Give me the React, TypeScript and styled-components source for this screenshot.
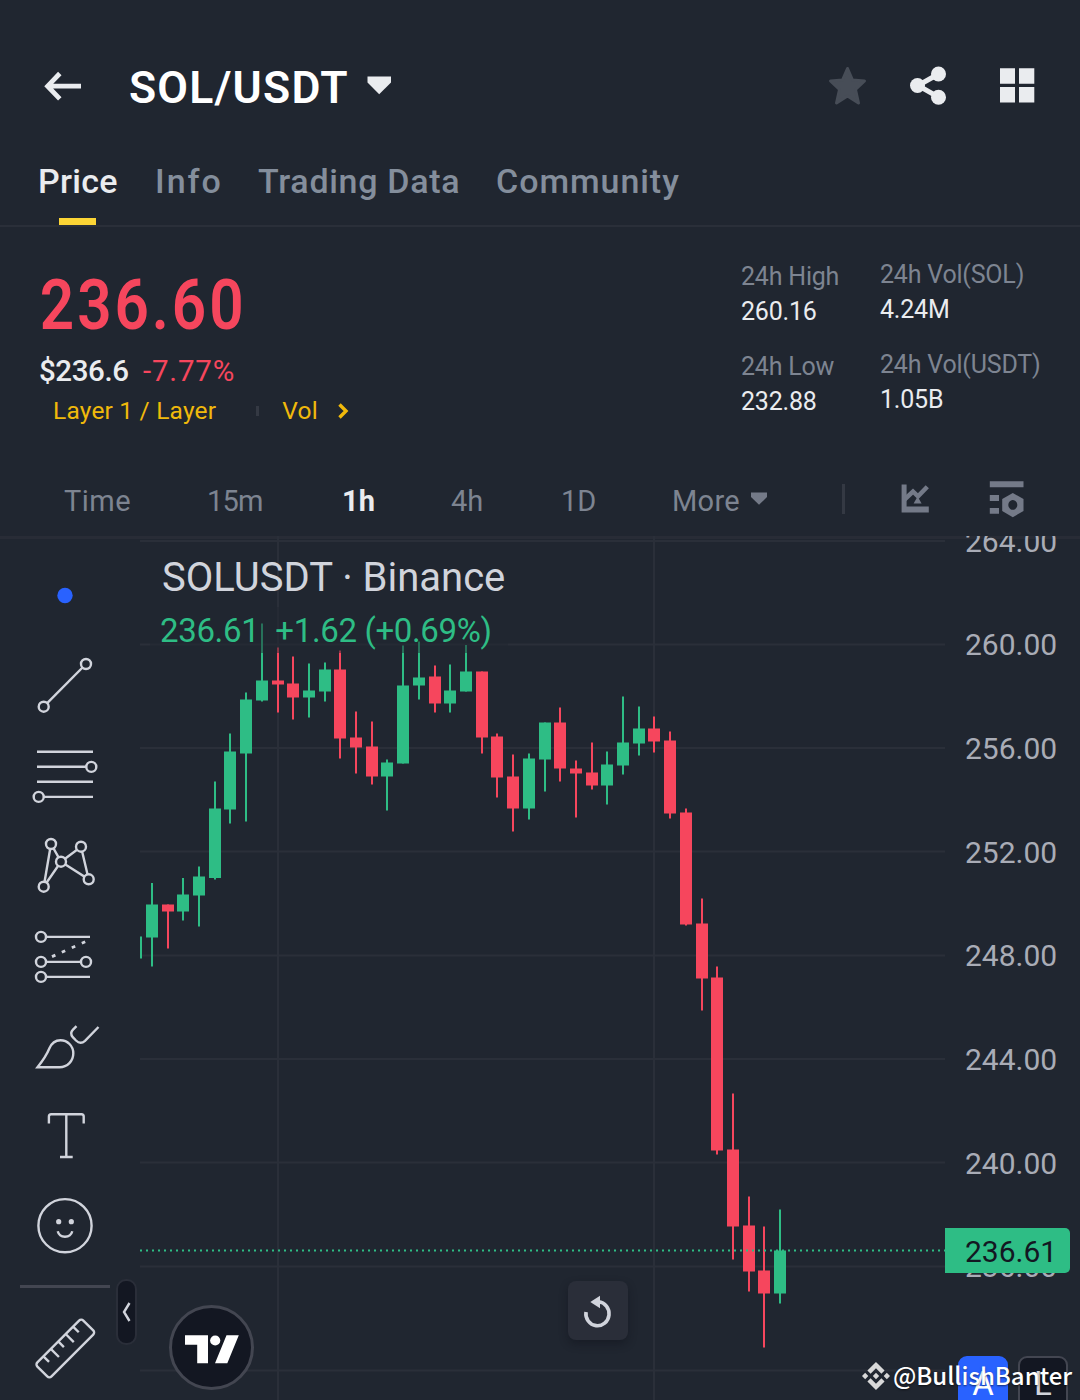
import React from "react";
import styled, { createGlobalStyle } from "styled-components";

const c = {
  bg: "#202630",
  line: "#2a2f39",
  strong: "#eaecef",
  muted: "#848e9c",
  icon: "#747a88",
  tool: "#d1d4dc",
  red: "#f6465d",
  green: "#2ebd85",
  yellow: "#fcd535",
  gold: "#f0b90b",
  ink: "#131722",
};

const GlobalStyle = createGlobalStyle`
  * { box-sizing: border-box; }
  body { margin: 0; background: ${c.bg}; }
`;

const Screen = styled.main`
  display: flex;
  flex-direction: column;
  width: 1080px;
  height: 1400px;
  overflow: hidden;
  position: relative;
  background: ${c.bg};
  color: ${c.strong};
  font-family: Roboto, "Liberation Sans", sans-serif;
  white-space: nowrap;
`;

const Glyph = styled.svg`
  display: block;
  flex: none;
`;

/* ---------- header ---------- */

const Header = styled.header`
  display: flex;
  align-items: center;
  height: 118px;
  margin-top: 28px;
  padding: 0 45px 0 43px;
`;

const Pair = styled.h1`
  margin: 2px 0 0 46px;
  width: 237px;
  font-size: 44.5px;
  line-height: 60px;
  font-weight: 600;
  letter-spacing: 1.2px;
  color: #fff;
`;

const Actions = styled.div`
  display: flex;
  align-items: center;
  gap: 43px;
  margin-left: auto;
  margin-bottom: 2px;
`;

const Tabs = styled.nav`
  display: flex;
  height: 81px;
  padding-left: 38px;
  border-bottom: 2px solid ${c.line};
`;

const Tab = styled.div<{ $active?: boolean; $w: number; $track: number }>`
  display: flex;
  flex-direction: column;
  width: ${(p) => p.$w}px;
  font-size: 34px;
  line-height: 70px;
  font-weight: 500;
  letter-spacing: ${(p) => p.$track}px;
  color: ${(p) => (p.$active ? c.strong : c.muted)};
`;

const Underline = styled.span`
  width: 37px;
  height: 8px;
  margin: 2px 0 0 21px;
  background: ${c.yellow};
`;

/* ---------- ticker ---------- */

const Ticker = styled.section`
  display: flex;
  height: 237px;
  padding: 32px 0 0 39px;
`;

const Quote = styled.div`
  width: 702px;
  padding-top: 3px;
`;

const BigPrice = styled.div`
  padding-left: 1px;
  font-size: 70px;
  line-height: 86px;
  font-weight: 600;
  letter-spacing: 3.4px;
  color: ${c.red};
  transform: scaleX(0.86);
  transform-origin: left;
`;

const FiatRow = styled.div`
  display: flex;
  font-size: 29.5px;
  line-height: 47px;
  font-weight: 500;
`;

const Fiat = styled.span`
  width: 104px;
  letter-spacing: -0.4px;
`;

const Change = styled.span`
  color: ${c.red};
  font-weight: 400;
  letter-spacing: 0.8px;
`;

const TagRow = styled.div`
  display: flex;
  align-items: center;
  padding-left: 14px;
  font-size: 24.5px;
  line-height: 32px;
  letter-spacing: 0.2px;
  color: ${c.gold};
`;

const Tick = styled.span`
  width: 3px;
  height: 10px;
  margin: 0 23px 0 40px;
  background: #343943;
`;

const StatColumn = styled.div<{ $w: number; $raise?: number }>`
  display: flex;
  flex-direction: column;
  gap: 20px;
  width: ${(p) => p.$w}px;
  margin-top: ${(p) => -(p.$raise ?? 0)}px;
`;

const Stat = styled.div`
  display: flex;
  flex-direction: column;
  font-size: 25px;
  line-height: 35px;
  letter-spacing: -0.2px;
`;

const StatLabel = styled.span`
  color: #7d8491;
`;

/* ---------- intervals ---------- */

const Intervals = styled.div`
  display: grid;
  grid-template-columns: 143px 135px 109px 110px 111px 78px 92px 58px 89px auto;
  align-items: center;
  height: 72px;
  padding-left: 64px;
  font-size: 29px;
  color: ${c.muted};
`;

const Interval = styled.span<{ $active?: boolean; $track?: number }>`
  padding-top: 1px;
  color: ${(p) => (p.$active ? c.strong : "#7d8491")};
  font-weight: ${(p) => (p.$active ? 700 : 400)};
  letter-spacing: ${(p) => p.$track ?? 0}px;
`;

const VRule = styled.span`
  width: 3px;
  height: 30px;
  margin-bottom: 2px;
  background: #343943;
`;

/* ---------- chart ---------- */

const ChartArea = styled.section`
  display: flex;
  flex: 1;
  min-height: 0;
  box-shadow: inset 0 3px #282c36;
`;

const Toolbar = styled.aside`
  display: flex;
  flex-direction: column;
  position: relative;
  width: 140px;
  padding: 14px 0 0 20px;
`;

const Separator = styled.span`
  width: 90px;
  height: 3px;
  margin: 15px 0;
  background: #434651;
`;

const Handle = styled.button`
  position: absolute;
  left: 116px;
  top: 743px;
  width: 21px;
  height: 66px;
  padding: 0;
  display: grid;
  place-items: center;
  border: 2px solid #2a2e39;
  border-radius: 10px;
  background: ${c.ink};
`;

const Pane = styled.div`
  position: relative;
  width: 805px;
`;

const Legend = styled.div`
  position: absolute;
  left: 10px;
  top: 11px;
  color: ${c.tool};
`;

const LegendTitle = styled.div`
  padding-left: 12px;
  height: 60px;
  font-size: 40px;
  line-height: 61px;
`;

const LegendValues = styled.div`
  display: flex;
  gap: 16px;
  width: 358px;
  height: 46px;
  padding-left: 10px;
  font-size: 33px;
  line-height: 47px;
  letter-spacing: -0.35px;
  color: ${c.green};
  background: rgba(32, 38, 48, 0.5);
`;

const Reload = styled.button`
  position: absolute;
  left: 428px;
  top: 745px;
  width: 60px;
  height: 59px;
  padding: 0;
  border: 0;
  border-radius: 8px;
  background: #2a2e39;
  box-shadow: 0 4px 8px rgba(15, 18, 26, 0.45);
`;

const Badge = styled.div`
  position: absolute;
  left: 29px;
  top: 769px;
  width: 85px;
  height: 85px;
  border: 3px solid #434651;
  border-radius: 50%;
  background: ${c.ink};
`;

const PriceScale = styled.div`
  position: relative;
  display: flex;
  flex-direction: column;
  width: 135px;
  overflow: hidden;
`;

const Level = styled.span<{ $first?: boolean }>`
  flex: none;
  height: 103.7px;
  margin-top: ${(p) => (p.$first ? -46.5 : 0)}px;
  padding-left: 20px;
  font-size: 30px;
  line-height: 103.7px;
  color: #a9acb6;
`;

const LastPrice = styled.span`
  position: absolute;
  left: 0;
  top: 692px;
  width: 125px;
  height: 45px;
  padding-left: 20px;
  border-radius: 0 5px 5px 0;
  background: ${c.green};
  color: ${c.ink};
  font-size: 30px;
  line-height: 47px;
`;

const ScaleModes = styled.div`
  position: absolute;
  left: 13px;
  top: 820px;
  display: flex;
  gap: 10px;
`;

const Mode = styled.span<{ $on?: boolean }>`
  width: 50px;
  height: 56px;
  border-radius: 9px;
  border: 2px solid ${(p) => (p.$on ? "#2962ff" : "#434651")};
  background: ${(p) => (p.$on ? "#2962ff" : c.ink)};
  color: ${(p) => (p.$on ? "#fff" : c.tool)};
  font-size: 33px;
  line-height: 52px;
  text-align: center;
`;

const Watermark = styled.div`
  position: absolute;
  left: 862px;
  top: 1361px;
  display: flex;
  align-items: center;
  gap: 3px;
  height: 30px;
  color: #fff;
  font: 500 24px/30px "Noto Sans CJK SC", "Noto Sans", sans-serif;
  text-shadow: 0 1px 2px rgba(0, 0, 0, 0.55);
`;

const Handle2 = styled.span`
  margin-top: -2px;
`;

/* ---------- data ---------- */

// x centre, wick top, body top, body bottom, wick bottom, rising
type Candle = [number, number, number, number, number, 0 | 1];
const candles: Candle[] = [
  [152, 883, 904.5, 937.5, 966.5, 1],
  [168, 904.5, 904.5, 911.5, 948.5, 0],
  [183, 878, 894.5, 911.5, 920.5, 1],
  [199, 866.5, 876.5, 895.5, 926.5, 1],
  [215, 781.5, 808.5, 878, 879.5, 1],
  [230, 733.5, 751.5, 809.5, 823.5, 1],
  [246, 692.5, 699.5, 753.5, 821.5, 1],
  [262, 623.5, 680.5, 700.5, 701.5, 1],
  [278, 647.5, 680.5, 684.5, 712.5, 0],
  [293, 656.5, 683.5, 697.5, 719.5, 0],
  [309, 663.5, 690.5, 697.5, 717.5, 1],
  [325, 662.5, 669.5, 691.5, 701.5, 1],
  [340, 650.5, 669.5, 738.5, 758.5, 0],
  [356, 711.5, 737.5, 747.5, 773.5, 0],
  [372, 721.5, 746.5, 776.5, 784.5, 0],
  [387, 759.5, 762.5, 776.5, 810.5, 1],
  [403, 645.5, 685.5, 763.5, 763.5, 1],
  [419, 641.5, 677.5, 685.5, 699.5, 1],
  [435, 665.5, 676.5, 703.5, 712.5, 0],
  [450, 664.5, 690.5, 703.5, 712.5, 1],
  [466, 645, 671.5, 691.5, 691.5, 1],
  [482, 671.5, 671.5, 737.5, 753.5, 0],
  [497, 733.5, 736.5, 777.5, 797.5, 0],
  [513, 754.5, 776.5, 808.5, 831.5, 0],
  [529, 753.5, 758.5, 808.5, 819.5, 1],
  [545, 722.5, 722.5, 759.5, 791.5, 1],
  [560, 707.5, 722.5, 768.5, 781.5, 0],
  [576, 760.5, 768.5, 773.5, 817.5, 0],
  [592, 742.5, 772.5, 785.5, 789.5, 0],
  [607, 751.5, 764.5, 785.5, 804.5, 1],
  [623, 696.5, 742.5, 765.5, 774.5, 1],
  [639, 706.5, 728.5, 743.5, 755.5, 1],
  [654, 716.5, 728.5, 741.5, 752.5, 0],
  [670, 731.5, 740.5, 813.5, 818.5, 0],
  [686, 808.5, 812.5, 924.5, 925.5, 0],
  [702, 898.5, 923.5, 978.5, 1010.5, 0],
  [717, 966.5, 977.5, 1150.5, 1154.5, 0],
  [733, 1093.5, 1149.5, 1226.5, 1259.5, 0],
  [749, 1196.5, 1225.5, 1271.5, 1291.5, 0],
  [764, 1226.5, 1270.5, 1293.5, 1347.5, 0],
  [780, 1209.5, 1250.5, 1293.5, 1303.5, 1],
];

const gridRows = [541, 644.5, 748, 851.5, 955.5, 1059, 1162.5, 1266.5, 1370.5];
const gridCols = [278, 654];
const levels = ["264.00", "260.00", "256.00", "252.00", "248.00", "244.00", "240.00", "236.00"];

const tabs = [
  { label: "Price", w: 117, track: 0.3 },
  { label: "Info", w: 103, track: 2 },
  { label: "Trading Data", w: 238, track: 0.7 },
  { label: "Community", w: 200, track: 0.95 },
];

const intervals = [
  { label: "Time", track: 0.5 },
  { label: "15m", track: -0.8 },
  { label: "1h", active: true },
  { label: "4h" },
  { label: "1D" },
  { label: "More", track: 0.3 },
];

const statColumns = [
  {
    w: 139,
    raise: 0,
    items: [
      { label: "24h High", value: "260.16" },
      { label: "24h Low", value: "232.88" },
    ],
  },
  {
    w: 190,
    raise: 2,
    items: [
      { label: "24h Vol(SOL)", value: "4.24M" },
      { label: "24h Vol(USDT)", value: "1.05B" },
    ],
  },
];

/* ---------- drawings ---------- */

const Tool = ({ children }: { children: React.ReactNode }) => (
  <Glyph width="90" height="90" viewBox="0 0 90 90" fill="none" stroke={c.tool} strokeWidth="2.4">
    {children}
  </Glyph>
);

const Nodes = ({ at }: { at: [number, number][] }) => (
  <>
    {at.map(([x, y]) => (
      <circle key={`${x}-${y}`} cx={x} cy={y} r="5" fill={c.bg} />
    ))}
  </>
);

const Tools = () => (
  <>
    <Tool>
      <circle cx="45" cy="45.5" r="7.7" fill="#2962ff" stroke="none" />
    </Tool>
    <Tool>
      <path d="M23.7 66.7 66 24" />
      <Nodes at={[[23.7, 66.7], [66, 24]]} />
    </Tool>
    <Tool>
      <path d="M17 21.7h56M17 36.7h54M17 51.7h56M19 66.9h54" />
      <Nodes at={[[71.3, 36.9], [18.7, 66.9]]} />
    </Tool>
    <Tool>
      <path d="M31 24 23.7 66.7 41 41.7zM41 41.7 61 26.7 68.7 59.3z" />
      <Nodes at={[[31, 24], [61, 26.7], [41, 41.7], [23.7, 66.7], [68.7, 59.3]]} />
    </Tool>
    <Tool>
      <path d="M21 26.9h49M21 51.9h45M21 66.9h49" />
      <path d="m32 46.6 3.4-1.5m6.4-2.9 3.4-1.5m6.6-3 3.4-1.5m6.6-3 3.4-1.5" strokeWidth="2.8" />
      <Nodes at={[[21, 26.9], [21, 51.9], [66, 51.9], [21, 66.9]]} />
    </Tool>
    <Tool>
      <path d="M17.5 67.3H39.5C47.5 67.3 53.3 61 53.3 53.3 53.3 46 47.5 40.2 40.5 40.2 35 40.2 31.500 43.2 29.3 48.5 26.500 55.500 22.500 61 17.500 67.3z" />
      <path d="M56.500 26.200 53 29.700Q49.500 33.300 52.800 37.200L56 40.500Q60.500 44.800 65 40.800L78.500 27" />
    </Tool>
    <Tool>
      <path d="M28.900 33.500V26.500Q28.900 24.200 31.200 24.200H61.400Q63.700 24.200 63.700 26.500V33.500M46.300 24.200V67M40 67H52.700" />
    </Tool>
    <Tool>
      <circle cx="45" cy="45.700" r="26.600" />
      <circle cx="38.700" cy="41.700" r="2.600" fill={c.tool} stroke="none" />
      <circle cx="51.300" cy="41.700" r="2.600" fill={c.tool} stroke="none" />
      <path d="M37.700 51.200C39.700 58.500 50.300 58.500 52.300 51.200" />
    </Tool>
    <Separator />
    <Tool>
      <g transform="translate(45.300 45.500) rotate(-45)">
        <rect x="-32.500" y="-10" width="65" height="20" rx="3" />
        <path d="M-21-10V-2M-10.500-10V1.500M0-10V-2M10.500-10V1.500M21-10V-2" />
      </g>
    </Tool>
  </>
);

const Plot = () => (
  <Glyph width="805" height="864" viewBox="140 536 805 864">
    <g stroke={c.line} strokeWidth="2">
      {gridRows.map((y) => (
        <path key={y} d={`M140 ${y}H945`} />
      ))}
      {gridCols.map((x) => (
        <path key={x} d={`M${x} 536V1400`} />
      ))}
    </g>
    <rect x="140" y="936.500" width="2" height="22" fill={c.green} />
    {candles.map(([x, high, top, bottom, low, up]) => (
      <g key={x} fill={up ? c.green : c.red}>
        <rect x={x - 1} y={high} width="2" height={low - high} />
        <rect x={x - 6} y={top} width="12" height={bottom - top} />
      </g>
    ))}
    <path d="M140 1250.500H945" stroke={c.green} strokeWidth="2" strokeDasharray="2 4" />
  </Glyph>
);

export default function App() {
  return (
    <>
      <GlobalStyle />
      <Screen>
        <Header>
          <Glyph width="40" height="32" viewBox="0 0 40 32" fill="none" stroke={c.strong} strokeWidth="4.800">
            <path d="M4 15.200H38M16.800 2.500 4.600 15.200 16.800 27.900" />
          </Glyph>
          <Pair>SOL/USDT</Pair>
          <Glyph width="26" height="22" viewBox="0 0 26 22" fill={c.strong}>
            <path d="M1.500 .5H25V6.500L13.200 18.200 1.500 6.500z" />
          </Glyph>
          <Actions>
            <Glyph width="39" height="40" viewBox="0 0 39 40" fill="#474d57" stroke="#474d57" strokeWidth="3" strokeLinejoin="round">
              <path d="m19.500 2.500 5 11.500 12 1-9 8.500 3 13.500-11-7-11 7 3-13.500-9-8.500 12-1z" />
            </Glyph>
            <Glyph width="38" height="40" viewBox="0 0 38 40" fill={c.strong}>
              <path d="M28.500 8 8 19.500 28.500 31.200" fill="none" stroke={c.strong} strokeWidth="5" />
              <circle cx="7.500" cy="19.500" r="7.500" />
              <circle cx="28.500" cy="8" r="7.500" />
              <circle cx="28.500" cy="31.200" r="7.500" />
            </Glyph>
            <Glyph width="44" height="36" viewBox="0 0 44 36" fill={c.strong}>
              <path d="M9 .3h15v15.400H9zM28 .3h15.300v15.400H28zM9 19h15v15.500H9zM28 19h15.300v15.500H28z" />
            </Glyph>
          </Actions>
        </Header>

        <Tabs>
          {tabs.map((t, i) => (
            <Tab key={t.label} $w={t.w} $track={t.track} $active={i === 0}>
              {t.label}
              {i === 0 && <Underline />}
            </Tab>
          ))}
        </Tabs>

        <Ticker>
          <Quote>
            <BigPrice>236.60</BigPrice>
            <FiatRow>
              <Fiat>$236.6</Fiat>
              <Change>-7.77%</Change>
            </FiatRow>
            <TagRow>
              <span>Layer 1 / Layer</span>
              <Tick />
              <span>Vol</span>
              <Glyph width="40" height="20" viewBox="0 0 40 20" fill="none" stroke={c.gold} strokeWidth="3.400">
                <path d="M21.500 3.500 28 10 21.500 16.500" />
              </Glyph>
            </TagRow>
          </Quote>
          {statColumns.map((col) => (
            <StatColumn key={col.w} $w={col.w} $raise={col.raise}>
              {col.items.map((s) => (
                <Stat key={s.label}>
                  <StatLabel>{s.label}</StatLabel>
                  <span>{s.value}</span>
                </Stat>
              ))}
            </StatColumn>
          ))}
        </Ticker>

        <Intervals>
          {intervals.map((it) => (
            <Interval key={it.label} $active={it.active} $track={it.track}>
              {it.label}
            </Interval>
          ))}
          <Glyph width="18" height="18" viewBox="0 0 18 18" fill={c.icon}>
            <path d="M1 1.500H17V6L9 13.800 1 6z" />
          </Glyph>
          <VRule />
          <Glyph width="30" height="32" viewBox="0 0 30 32" fill={c.icon}>
            <path d="M1.600 .5H6.600V22.500H28.800V28.500H1.600z" />
            <path d="M4.500 15.500 13 7.500 18 12.300 27.300 2.800" fill="none" stroke={c.icon} strokeWidth="4.500" />
            <path d="m13.600 19.500 4-7 4 7z" />
          </Glyph>
          <Glyph width="36" height="40" viewBox="0 0 36 40" fill={c.icon}>
            <path d="M.8 1.300h33.700v6H.8zM.8 15H10v6H.8zM.8 28H10v5.700H.8z" />
            <path
              fillRule="evenodd"
              d="m23.800 13 10.700 6v12l-10.700 6.200L13.200 31V19zm0 7a4.500 4.900 0 1 0 .01 0z"
            />
          </Glyph>
        </Intervals>

        <ChartArea>
          <Toolbar>
            <Tools />
            <Handle aria-label="Collapse">
              <Glyph width="10" height="20" viewBox="0 0 10 20" fill="none" stroke={c.tool} strokeWidth="2.400">
                <path d="M7.500 1 2 10 7.500 19" />
              </Glyph>
            </Handle>
          </Toolbar>
          <Pane>
            <Plot />
            <Legend>
              <LegendTitle>SOLUSDT · Binance</LegendTitle>
              <LegendValues>
                <span>236.61</span>
                <span>+1.62 (+0.69%)</span>
              </LegendValues>
            </Legend>
            <Badge>
              <Glyph width="79" height="79" viewBox="0 0 79 79" fill="#fff">
                <path d="M13 27.300H36V55.300H25.200V36.700H13zM54.500 27.300H66.800L55.300 55.300H43z" />
                <circle cx="43.200" cy="32.500" r="5.100" />
              </Glyph>
            </Badge>
            <Reload aria-label="Reset chart">
              <Glyph width="60" height="59" viewBox="0 0 60 59" fill="none" stroke={c.tool} strokeWidth="3.600">
                <path d="M18 31A11.600 12 0 1 0 30.500 20.800" />
                <path d="M22.300 21 32 14.800V27.200z" fill={c.tool} stroke="none" />
              </Glyph>
            </Reload>
          </Pane>
          <PriceScale>
            {levels.map((l, i) => (
              <Level key={l} $first={i === 0}>
                {l}
              </Level>
            ))}
            <LastPrice>236.61</LastPrice>
            <ScaleModes>
              <Mode $on>A</Mode>
              <Mode>L</Mode>
            </ScaleModes>
          </PriceScale>
        </ChartArea>

        <Watermark>
          <Glyph width="28" height="28" viewBox="0 0 24 24" fill="#d9d9d9">
            <path d="M16.624 13.920l2.717 2.715-7.353 7.353-7.353-7.352 2.717-2.716 4.636 4.659zM21.260 9.284 24 12l-2.715 2.716L18.568 12zM11.988 9.285l2.717 2.691-2.717 2.717L9.272 12zM2.716 9.284 5.409 12l-2.692 2.692L0 12zM11.988.011l7.353 7.329-2.717 2.716-4.636-4.636-4.635 4.660-2.718-2.716z" />
          </Glyph>
          <Handle2>@BullishBanter</Handle2>
        </Watermark>
      </Screen>
    </>
  );
}
